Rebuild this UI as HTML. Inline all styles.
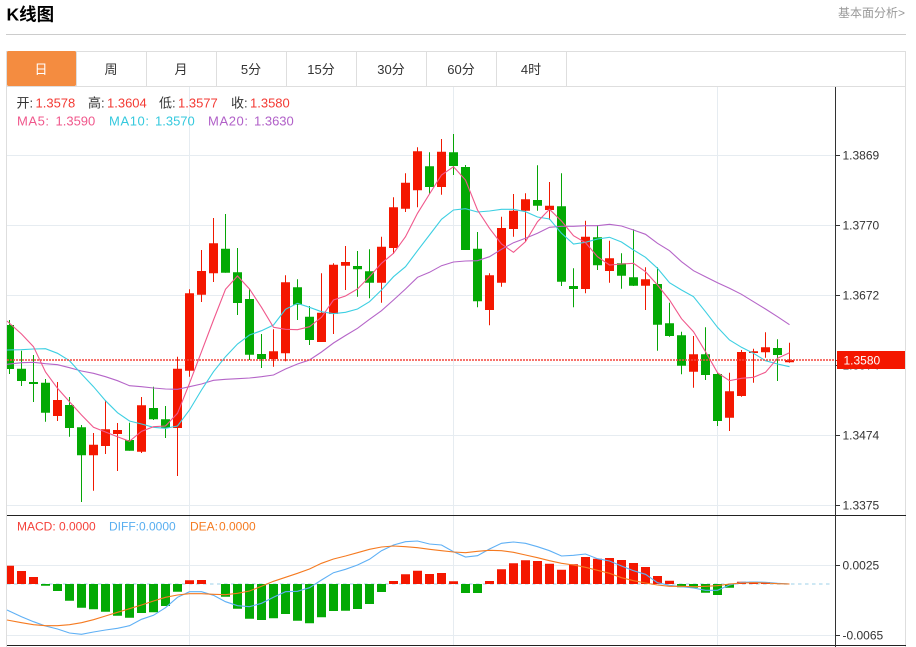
<!DOCTYPE html>
<html lang="zh"><head><meta charset="utf-8"><title>K线图</title>
<style>
html,body{margin:0;padding:0;background:#fff;width:916px;height:647px;overflow:hidden}
svg{display:block;position:absolute;left:0;top:0}
text{font-family:"Liberation Sans","Noto Sans CJK SC",sans-serif;white-space:pre}
</style></head><body>
<svg width="916" height="647" viewBox="0 0 916 647" xmlns="http://www.w3.org/2000/svg">
<text x="6.500" y="20.500" font-size="17.500" font-weight="700" fill="#000">K线图</text>
<text x="838" y="17" font-size="12" fill="#999">基本面分析&gt;</text>
<rect x="6" y="34" width="900" height="1" fill="#ccc"/>
<!-- frame -->
<path d="M6.500 51V647M905.500 51V647M6 51.500H906M6 86.500H906" stroke="#dedede" fill="none"/>
<path d="M76.500 51V86M146.500 51V86M216.500 51V86M286.500 51V86M356.500 51V86M426.500 51V86M496.500 51V86M566.500 51V86" stroke="#dedede" fill="none"/>
<rect x="7" y="51" width="69" height="35" rx="1.500" fill="#f48c40"/>
<g font-size="13" text-anchor="middle" fill="#333">
<text x="41" y="74" fill="#fff">日</text>
<text x="111" y="74">周</text>
<text x="181" y="74">月</text>
<text x="251" y="74">5分</text>
<text x="321" y="74">15分</text>
<text x="391" y="74">30分</text>
<text x="461" y="74">60分</text>
<text x="531" y="74">4时</text>
</g>
<!-- grid -->
<path d="M7 155.500H835M7 225.500H835M7 295.500H835M7 365.500H835M7 435.500H835M7 505.500H835M7 565.500H835M7 635.500H835M189.500 87V645M453.500 87V645M717.500 87V645" stroke="#e6ecf1" fill="none"/>
<!-- legend -->
<g font-size="13">
<text x="16.500" y="107.500" fill="#333">开:</text><text x="35.500" y="107.500" fill="#f33a33">1.3578</text>
<text x="88" y="107.500" fill="#333">高:</text><text x="107" y="107.500" fill="#f33a33">1.3604</text>
<text x="159" y="107.500" fill="#333">低:</text><text x="178" y="107.500" fill="#f33a33">1.3577</text>
<text x="231" y="107.500" fill="#333">收:</text><text x="250" y="107.500" fill="#f33a33">1.3580</text>
<text x="17" y="125.500" fill="#f0588c" textLength="32">MA5:</text><text x="55.500" y="125.500" fill="#f0588c">1.3590</text>
<text x="109" y="125.500" fill="#35c9de" textLength="40">MA10:</text><text x="155" y="125.500" fill="#35c9de">1.3570</text>
<text x="208" y="125.500" fill="#b160c8" textLength="40">MA20:</text><text x="254" y="125.500" fill="#b160c8">1.3630</text>
</g>
<g font-size="12">
<text x="17" y="530.500" fill="#f4413a">MACD:</text><text x="59" y="530.500" fill="#f4413a">0.0000</text>
<text x="109" y="530.500" fill="#58aef0">DIFF:</text><text x="139" y="530.500" fill="#58aef0">0.0000</text>
<text x="190" y="530.500" fill="#f47a20">DEA:</text><text x="219" y="530.500" fill="#f47a20">0.0000</text>
</g>
<!-- red wicks -->
<path fill="none" stroke="#f01800" d="M57.500 382V421M93.500 433V490.700M105.500 400V454M117.500 423V471M141.500 397V453M177.500 356.700V476M189.500 289.300V376.700M201.500 250V302M213.500 218V282M273.500 329.300V366.700M285.500 275.300V361.300M321.500 273.300V342M333.500 263.300V334M345.500 246V290M381.500 236.700V302.700M393.500 197.300V254M405.500 173.300V212M417.500 147.300V207.300M441.500 139V194.700M489.500 273.300V325.300M501.500 216.700V286.700M513.500 194V236.700M525.500 193.300V242M549.500 182V220M585.500 220.700V293.300M609.500 240.700V282.700M645.500 267.300V310M693.500 336V387.700M729.500 372.700V431M741.500 350V396.700M753.500 348.700V382.700M765.500 332.300V357.700M789.500 342.700V362.700"/>
<!-- green wicks -->
<path fill="none" stroke="#06a506" d="M9.500 320V374M21.500 350.700V386M33.500 355V402M45.500 379V421.700M69.500 397V436.700M81.500 425V502M129.500 422.700V450.700M153.500 386.700V420M165.500 406V438M225.500 214V272.700M237.500 248V315M249.500 289.300V360M261.500 334V368M297.500 279.300V320M309.500 306V345M357.500 251V296.700M369.500 249.300V298.300M429.500 152.300V194M453.500 134V175M465.500 165V250M477.500 232V307.300M537.500 165.300V210.700M561.500 173.300V286M573.500 268.300V307.300M597.500 225V270M621.500 253.300V288.700M633.500 229.300V286M657.500 267.300V350.700M669.500 302.700V336.700M681.500 331.700V374.300M705.500 327.300V380M717.500 372.300V426M777.500 339.300V381"/>
<!-- red bodies -->
<path fill="#f41700" d="M53 400h9V416h-9zM89 444.700h9V455.300h-9zM101 429.300h9V446h-9zM113 430h9V434h-9zM137 405.300h9V451.700h-9zM173 368.700h9V428h-9zM185 293.300h9V370.700h-9zM197 271h9V294.700h-9zM209 243.300h9V273.300h-9zM269 351.300h9V359h-9zM281 282.300h9V353.300h-9zM317 312.700h9V342h-9zM329 264.700h9V314h-9zM341 262h9V265.700h-9zM377 246.700h9V282.700h-9zM389 207.300h9V248h-9zM401 182.700h9V208.700h-9zM413 151.300h9V190.300h-9zM437 151.700h9V187h-9zM485 275.300h9V310h-9zM497 228h9V282.700h-9zM509 210.700h9V229h-9zM521 199.300h9V210.700h-9zM545 205.700h9V210h-9zM581 236.700h9V289h-9zM605 258.300h9V271h-9zM641 279.300h9V285.700h-9zM689 354.300h9V371.700h-9zM725 391.300h9V417.700h-9zM737 352h9V396h-9zM749 351.300h9V353h-9zM761 347.300h9V352.300h-9zM785 360h9V362.300h-9z"/>
<!-- green bodies -->
<path fill="#03a904" d="M7 325h7V369h-7zM17 368.700h9V381h-9zM29 382h9V384h-9zM41 382.700h9V412.700h-9zM65 405h9V428h-9zM77 427.300h9V455.300h-9zM125 440h9V450.700h-9zM149 408h9V419.300h-9zM161 419.300h9V428h-9zM221 248.700h9V272.700h-9zM233 272.300h9V303h-9zM245 299h9V354.700h-9zM257 354h9V359h-9zM293 287.300h9V304.700h-9zM305 316.700h9V340h-9zM353 266h9V269.300h-9zM365 271.300h9V282.700h-9zM425 166.300h9V187h-9zM449 152.300h9V166h-9zM461 167h9V250h-9zM473 248.700h9V301.300h-9zM533 200h9V205.700h-9zM557 206.300h9V281.700h-9zM569 286h9V289h-9zM593 237.300h9V265.300h-9zM617 263.300h9V275.700h-9zM629 277.300h9V285.700h-9zM653 284h9V324.700h-9zM665 323.300h9V336h-9zM677 335.300h9V365.700h-9zM701 354.300h9V375h-9zM713 374h9V421h-9zM773 348h9V355h-9z"/>
<!-- MA lines -->
<g fill="none" stroke-width="1.100">
<polyline stroke="#b565c8" points="7,364.300 21.500,362.700 33.500,362.300 45.500,363.700 57.500,364.700 69.500,367.700 81.500,371 93.500,373.300 105.500,376.700 117.500,380.700 129.500,385.700 141.500,386.700 153.500,388 165.500,389 177.500,389.300 189.500,386.700 201.500,384 213.500,380.300 225.500,379.300 237.500,378.700 249.500,378 261.500,376.700 273.500,375 285.500,369 297.500,364 309.500,360 321.500,352 333.500,343 345.500,335.500 357.500,328.300 369.500,319.300 381.500,310.700 393.500,300 405.500,289 417.500,277.300 429.500,272.300 441.500,265.700 453.500,262 465.500,261 477.500,260.700 489.500,256.700 501.500,249.300 513.500,242.700 525.500,238.300 537.500,233.300 549.500,227.300 561.500,226.300 573.500,226.300 585.500,225.700 597.500,225.700 609.500,224.300 621.500,226 633.500,230 645.500,234.300 657.500,243.300 669.500,250.700 681.500,261.700 693.500,270.700 705.500,276.700 717.500,282.700 729.500,288.300 741.500,294.300 753.500,301.700 765.500,309 777.500,316.700 789.500,324.700"/>
<polyline stroke="#3dcfe2" points="7,350 21.500,349.700 33.500,349 45.500,348.700 57.500,353.300 69.500,360.700 81.500,374 93.500,386.700 105.500,400.700 117.500,412.700 129.500,421 141.500,424 153.500,427.300 165.500,428.300 177.500,426 189.500,410 201.500,390 213.500,371.700 225.500,356.700 237.500,344 249.500,335 261.500,330.700 273.500,325 285.500,309.300 297.500,303.300 309.500,307.300 321.500,311.700 333.500,313.700 345.500,312.300 357.500,309 369.500,301.700 381.500,290 393.500,276.700 405.500,266.700 417.500,250.700 429.500,235 441.500,219.300 453.500,210 465.500,208.700 477.500,212 489.500,211 501.500,209.300 513.500,209.300 525.500,211.700 537.500,217 549.500,219 561.500,233.300 573.500,244 585.500,242.300 597.500,239 609.500,237.300 621.500,242 633.500,250 645.500,257.300 657.500,268.300 669.500,282.700 681.500,290 693.500,296.700 705.500,311.700 717.500,327.300 729.500,340 741.500,347.300 753.500,353.300 765.500,360.700 777.500,364 789.500,366.700"/>
<polyline stroke="#f0588c" points="7,321 21.500,334 33.500,346.700 45.500,372 57.500,388.300 69.500,401.700 81.500,415 93.500,427.300 105.500,432 117.500,436.700 129.500,441.300 141.500,431.300 153.500,426.700 165.500,426 177.500,413.300 189.500,383.300 201.500,351.700 213.500,320 225.500,289.300 237.500,276 249.500,289 261.500,307.300 273.500,327.300 285.500,329.300 297.500,329.700 309.500,326.700 321.500,317.300 333.500,300 345.500,296 357.500,289 369.500,276.700 381.500,263.300 393.500,253.300 405.500,236.700 417.500,213.300 429.500,194 441.500,175 453.500,166.700 465.500,180 477.500,210 489.500,228.300 501.500,244 513.500,252.300 525.500,241.700 537.500,221.700 549.500,209.300 561.500,221 573.500,235.700 585.500,242.700 597.500,256.700 609.500,265 621.500,264 633.500,263.300 645.500,271.700 657.500,285 669.500,300 681.500,318.700 693.500,331.700 705.500,351.700 717.500,372.700 729.500,380.700 741.500,378.300 753.500,377.300 765.500,372.300 777.500,358.300 789.500,352.700"/>
</g>
<path d="M7 360H835" stroke="#f4453c" stroke-width="1.500" stroke-dasharray="2 1" fill="none"/>
<!-- MACD -->
<path d="M7 584H832" stroke="#bde0f0" stroke-width="1.500" stroke-dasharray="3.500 3.500" fill="none"/>
<path fill="#f41700" d="M7 565.700h7V584h-7zM17 571h9V584h-9zM29 577h9V584h-9zM185 580.300h9V584h-9zM197 580h9V584h-9zM389 581h9V584h-9zM401 574.300h9V584h-9zM413 570.700h9V584h-9zM425 574h9V584h-9zM437 573h9V584h-9zM449 581.300h9V584h-9zM485 581h9V584h-9zM497 569.300h9V584h-9zM509 563.300h9V584h-9zM521 560.300h9V584h-9zM533 561h9V584h-9zM545 563.700h9V584h-9zM557 569.700h9V584h-9zM569 564.300h9V584h-9zM581 557h9V584h-9zM593 558.700h9V584h-9zM605 558h9V584h-9zM617 560h9V584h-9zM629 563h9V584h-9zM641 567h9V584h-9zM653 576h9V584h-9zM665 580.700h9V584h-9zM737 581.700h9V584h-9zM749 581.700h9V584h-9zM761 582h9V584h-9zM773 583h9V584h-9z"/>
<path fill="#03a904" d="M41 584h9V585.700h-9zM53 584h9V591h-9zM65 584h9V600.700h-9zM77 584h9V607.700h-9zM89 584h9V609.300h-9zM101 584h9V611.700h-9zM113 584h9V615.700h-9zM125 584h9V617.700h-9zM137 584h9V613h-9zM149 584h9V612.300h-9zM161 584h9V606h-9zM173 584h9V591.700h-9zM221 584h9V596.700h-9zM233 584h9V608.700h-9zM245 584h9V618.700h-9zM257 584h9V620h-9zM269 584h9V618.300h-9zM281 584h9V614h-9zM293 584h9V620.700h-9zM305 584h9V623.300h-9zM317 584h9V617.300h-9zM329 584h9V611h-9zM341 584h9V610.700h-9zM353 584h9V609h-9zM365 584h9V604h-9zM377 584h9V592h-9zM461 584h9V593h-9zM473 584h9V593h-9zM677 584h9V587.300h-9zM689 584h9V587.700h-9zM701 584h9V592.700h-9zM713 584h9V595h-9zM725 584h9V587.700h-9z"/>
<g fill="none" stroke-width="1.100">
<polyline stroke="#5fb0f5" points="7,610 21.500,616.700 33.500,621.700 45.500,626 57.500,629 69.500,633 81.500,634.300 93.500,632 105.500,630 117.500,628.300 129.500,625.700 141.500,619.300 153.500,615.300 165.500,607.700 177.500,597.300 189.500,591.700 201.500,591.700 213.500,595.300 225.500,601.700 237.500,605.700 249.500,606.700 261.500,603.300 273.500,597.300 285.500,591.700 297.500,591.300 309.500,587.700 321.500,580 333.500,572.700 345.500,569.300 357.500,565 369.500,559.300 381.500,550.700 393.500,545 405.500,541.700 417.500,541 429.500,544 441.500,545 453.500,551.700 465.500,557 477.500,555.700 489.500,549 501.500,543.300 513.500,542 525.500,543.300 537.500,546.700 549.500,550.700 561.500,556 573.500,555.300 585.500,554 597.500,558.700 609.500,561 621.500,566 633.500,570.700 645.500,574.300 657.500,582.700 669.500,585.300 681.500,586.700 693.500,588 705.500,590.300 717.500,590.300 729.500,585 741.500,582.300 753.500,582 765.500,582.300 777.500,583.300 789.500,584"/>
<polyline stroke="#f57a20" points="7,620 21.500,622.700 33.500,624.700 45.500,625.700 57.500,625.700 69.500,624.700 81.500,622.700 93.500,619.700 105.500,616 117.500,612.300 129.500,608.700 141.500,605 153.500,601 165.500,597.300 177.500,595 189.500,593.700 201.500,593.700 213.500,594.300 225.500,594.700 237.500,593.300 249.500,591 261.500,586.300 273.500,581.300 285.500,577.300 297.500,573.300 309.500,569 321.500,563.300 333.500,559 345.500,556 357.500,552.700 369.500,549.300 381.500,547 393.500,546 405.500,546.700 417.500,547.700 429.500,549.300 441.500,550.700 453.500,552 465.500,552.700 477.500,551.300 489.500,550.300 501.500,550.700 513.500,552.300 525.500,555 537.500,557.700 549.500,560.700 561.500,563.300 573.500,565 585.500,567.300 597.500,570.300 609.500,573.300 621.500,577.700 633.500,580.700 645.500,583 657.500,585 669.500,586.300 681.500,586.300 693.500,586.700 705.500,586.300 717.500,585.700 729.500,584 741.500,583 753.500,582.700 765.500,583 777.500,583.700 789.500,584"/>
</g>
<!-- axes -->
<path d="M7 515.500H906M7 645.500H906" stroke="#222" fill="none"/>
<path d="M835.500 87V647" stroke="#333" fill="none"/>
<path d="M836 155.500H840M836 225.500H840M836 295.500H840M836 365.500H840M836 435.500H840M836 505.500H840M836 565.500H840M836 635.500H840" stroke="#333" fill="none"/>
<g font-size="12" fill="#333">
<text x="842.500" y="159.500">1.3869</text>
<text x="842.500" y="229.500">1.3770</text>
<text x="842.500" y="299.500">1.3672</text>
<text x="842.500" y="369.500">1.3574</text>
<text x="842.500" y="439.500">1.3474</text>
<text x="842.500" y="509.500">1.3375</text>
<text x="842.500" y="569.500">0.0025</text>
<text x="842.500" y="639.500">-0.0065</text>
</g>
<rect x="837" y="351" width="68" height="18" fill="#f41700"/>
<path d="M836 360.500H840" stroke="#f41700" fill="none"/>
<text x="843.500" y="364.500" font-size="12" fill="#fff">1.3580</text>
</svg>
</body></html>
